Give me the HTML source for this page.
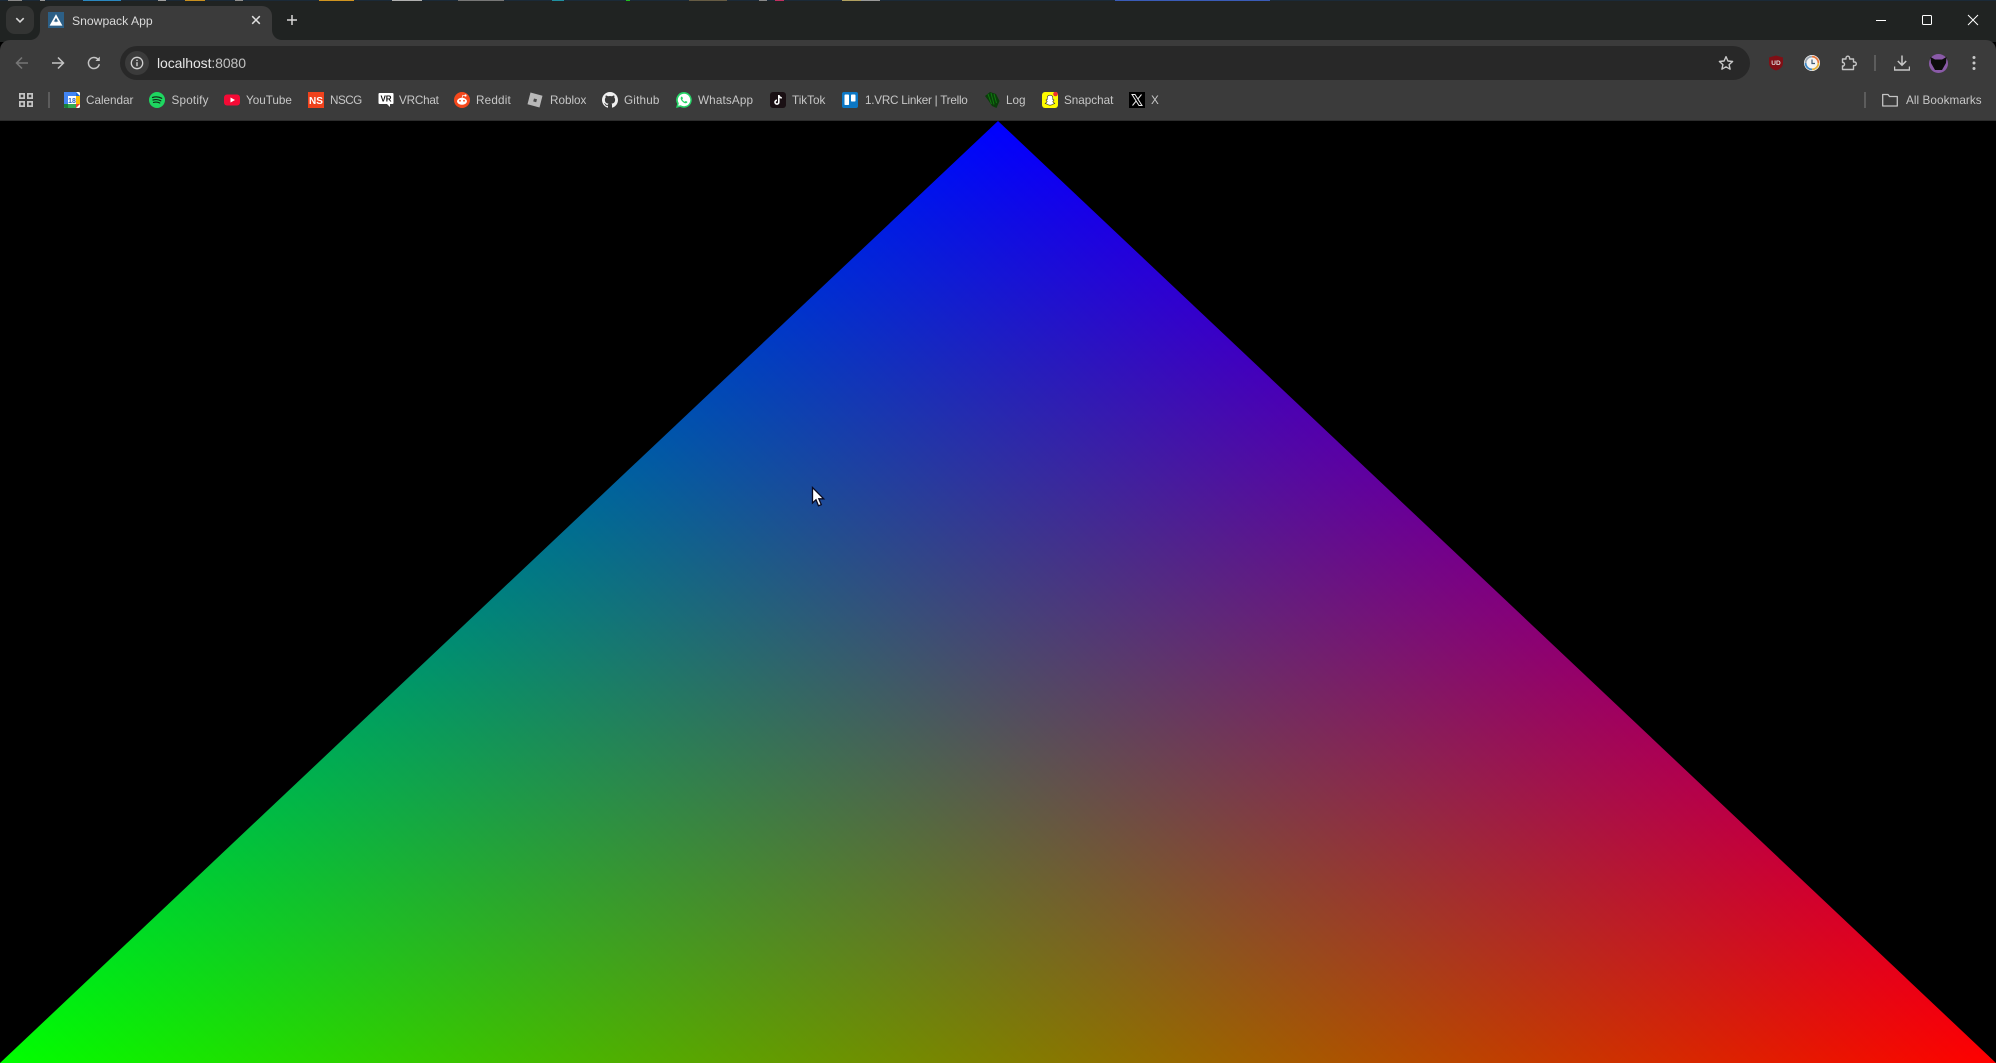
<!DOCTYPE html>
<html lang="en">
<head>
<meta charset="utf-8">
<title>Snowpack App</title>
<style>
html,body{margin:0;padding:0;background:#000;overflow:hidden}
body{width:1996px;height:1063px;position:relative;font-family:"Liberation Sans",sans-serif}
.abs,.bm,.ic{position:absolute}
.bm{top:92.5px;font-size:11.7px;line-height:15px;color:#c7c7c7;white-space:nowrap}
.ic{top:92px;width:16px;height:16px}
.p{position:absolute;top:0;height:1px}
</style>
</head>
<body>
<!-- tab strip -->
<div class="abs" style="left:0;top:0;width:1996px;height:42px;background:#202322"></div>
<!-- top strip -->
<div class="abs" style="left:0;top:0;width:1996px;height:1px;background:#1b2a38"></div>
<div class="p" style="left:8px;width:14px;background:#8a8a8a"></div>
<div class="p" style="left:40px;width:5px;background:#9a9a9a"></div>
<div class="p" style="left:83px;width:38px;background:#2a88c0"></div>
<div class="p" style="left:158px;width:8px;background:#a0a0a0"></div>
<div class="p" style="left:185px;width:20px;background:#c89020"></div>
<div class="p" style="left:235px;width:8px;background:#909090"></div>
<div class="p" style="left:319px;width:35px;background:#d09420"></div>
<div class="p" style="left:392px;width:30px;background:#b0b0b0"></div>
<div class="p" style="left:458px;width:46px;background:#777"></div>
<div class="p" style="left:552px;width:12px;background:#2090a0"></div>
<div class="p" style="left:626px;width:4px;background:#20c020"></div>
<div class="p" style="left:689px;width:38px;background:#665c44"></div>
<div class="p" style="left:759px;width:8px;background:#8a8a8a"></div>
<div class="p" style="left:775px;width:9px;background:#c03060"></div>
<div class="p" style="left:842px;width:19px;background:#b0a060"></div>
<div class="p" style="left:861px;width:19px;background:#999"></div>
<div class="p" style="left:1115px;width:155px;background:#3a5cb8"></div>

<!-- tab search -->
<div class="abs" style="left:6px;top:6px;width:28px;height:28px;border-radius:9px;background:#333433"></div>
<svg class="abs" style="left:14px;top:14px" width="12" height="12" viewBox="0 0 12 12"><path d="M2.3 4.2 6 7.9 9.7 4.2" fill="none" stroke="#d8d8d8" stroke-width="1.6"/></svg>

<!-- toolbar + bookmarks -->
<div class="abs" style="left:0;top:40px;width:1996px;height:80px;background:#3b3b3b;border-radius:10px 10px 0 0"></div>
<div class="abs" style="left:0;top:120px;width:1996px;height:1px;background:#2c2c2c"></div>

<!-- active tab -->
<div class="abs" style="left:40px;top:6px;width:232px;height:36px;background:#3b3b3b;border-radius:10px 10px 0 0"></div>
<svg class="abs" style="left:272px;top:30px" width="10" height="10" viewBox="0 0 10 10"><path d="M0 0V10H10A10 10 0 0 1 0 0Z" fill="#3b3b3b"/></svg>
<svg class="abs" style="left:30px;top:30px" width="10" height="10" viewBox="0 0 10 10"><path d="M10 0V10H0A10 10 0 0 0 10 0Z" fill="#3b3b3b"/></svg>
<svg class="abs" style="left:48px;top:12px" width="16" height="16" viewBox="0 0 16 16"><rect width="16" height="16" fill="#2c5f86"/><path d="M8 2.2 14.4 13.6H1.6Z" fill="#fff"/><path d="M8 5.8 10.4 10 9 9.2 8 10.4 7 9.2 5.6 10Z" fill="#2c5f86"/></svg>
<div class="abs" style="left:72px;top:14px;font-size:12.2px;line-height:15px;color:#d9d9d9;white-space:nowrap">Snowpack App</div>
<svg class="abs" style="left:250px;top:14px" width="12" height="12" viewBox="0 0 12 12"><path d="M2.2 2.2 9.8 9.8M9.800 2.2 2.2 9.8" stroke="#e0e0e0" stroke-width="1.5"/></svg>
<svg class="abs" style="left:286px;top:14px" width="12" height="12" viewBox="0 0 12 12"><path d="M6 1V11M1 6H11" stroke="#d8d8d8" stroke-width="1.5"/></svg>

<!-- window controls -->
<div class="abs" style="left:1876px;top:20px;width:10px;height:1px;background:#fff"></div>
<div class="abs" style="left:1922px;top:15px;width:8px;height:8px;border:1px solid #fff;border-radius:1.5px"></div>
<svg class="abs" style="left:1967px;top:14px" width="12" height="12" viewBox="0 0 12 12"><path d="M1 1 11 11M11 1 1 11" stroke="#fff" stroke-width="1"/></svg>

<!-- nav -->
<svg class="abs" style="left:14px;top:55px" width="16" height="16" viewBox="0 0 16 16"><path d="M14 8H2.5M8 2.5 2.5 8 8 13.5" fill="none" stroke="#767676" stroke-width="1.5"/></svg>
<svg class="abs" style="left:50px;top:55px" width="16" height="16" viewBox="0 0 16 16"><path d="M2 8H13.5M8 2.5 13.5 8 8 13.5" fill="none" stroke="#c4c4c4" stroke-width="1.5"/></svg>
<svg class="abs" style="left:86px;top:55px" width="16" height="16" viewBox="0 0 16 16"><path d="M13.3 9.2A5.5 5.5 0 1 1 12 4.3" fill="none" stroke="#c4c4c4" stroke-width="1.5"/><path d="M13.8 1.6V6H9.4Z" fill="#c4c4c4"/></svg>

<!-- omnibox -->
<div class="abs" style="left:120px;top:46px;width:1630px;height:34px;background:#282828;border-radius:17px"></div>
<div class="abs" style="left:125px;top:51px;width:24px;height:24px;background:#3b3b3b;border-radius:50%"></div>
<svg class="abs" style="left:130px;top:56px" width="14" height="14" viewBox="0 0 14 14"><circle cx="7" cy="7" r="5.7" fill="none" stroke="#d0d0d0" stroke-width="1.3"/><path d="M7 6.2V10.2" stroke="#d0d0d0" stroke-width="1.4"/><circle cx="7" cy="4.3" r=".85" fill="#d0d0d0"/></svg>
<div class="abs" style="left:157px;top:55px;font-size:14px;letter-spacing:-.1px;line-height:16px;color:#e6e6e6;white-space:nowrap">localhost<span style="color:#c0c0c0">:8080</span></div>
<svg class="abs" style="left:1718px;top:55px" width="16" height="16" viewBox="0 0 16 16"><path d="M8 1.7 9.9 6 14.6 6.5 11.1 9.6 12.1 14.2 8 11.8 3.9 14.2 4.9 9.6 1.4 6.5 6.1 6Z" fill="none" stroke="#c8c8c8" stroke-width="1.4" stroke-linejoin="round"/></svg>

<!-- extensions -->
<svg class="abs" style="left:1769px;top:55px" width="14" height="16" viewBox="0 0 14 16"><path d="M7 .5 14 2.5V8C14 12 10.500 14.500 7 15.500 3.500 14.500 0 12 0 8V2.500Z" fill="#800f15"/><text x="7" y="9.800" font-family="Liberation Sans, sans-serif" font-size="6.500" font-weight="700" fill="#ddd" text-anchor="middle">UD</text></svg>
<svg class="abs" style="left:1804px;top:55px" width="16" height="16" viewBox="0 0 16 16"><circle cx="8" cy="8" r="8" fill="#f4f4f4"/><path d="M8 1.600A6.400 6.400 0 0 1 14.400 8" fill="none" stroke="#e8763a" stroke-width="1.800"/><path d="M14.400 8A6.400 6.400 0 0 1 8 14.400" fill="none" stroke="#e8b43a" stroke-width="1.800"/><path d="M8 14.400A6.400 6.400 0 0 1 1.600 8" fill="none" stroke="#3f88c5" stroke-width="1.800"/><path d="M1.600 8A6.400 6.400 0 0 1 8 1.600" fill="none" stroke="#9aa5b1" stroke-width="1.800"/><path d="M8 4.500V8.500H11" fill="none" stroke="#3d5a73" stroke-width="1.200"/></svg>
<svg class="abs" style="left:1841px;top:55px" width="16" height="16" viewBox="0 0 16 16"><path d="M1.500 4H5V3A1.800 1.800 0 0 1 8.600 3V4H12.500V7H13.500A1.800 1.800 0 0 1 13.500 10.600H12.500V14.500H1.500V11H2.500A2 2 0 0 0 2.500 7.500H1.500Z" fill="none" stroke="#c4c4c4" stroke-width="1.400" stroke-linejoin="round"/></svg>
<div class="abs" style="left:1874px;top:55px;width:2px;height:16px;background:#5c5c5c"></div>
<svg class="abs" style="left:1894px;top:55px" width="16" height="16" viewBox="0 0 16 16"><path d="M8 .5V10M3.800 6 8 10.200 12.200 6M.5 11.500V15H15.500V11.500" fill="none" stroke="#c8c8c8" stroke-width="1.500"/></svg>
<svg class="abs" style="left:1929px;top:54px" width="19" height="19" viewBox="0 0 19 19"><circle cx="9.500" cy="9.500" r="9.500" fill="#8a5aa8"/><path d="M1.500 3 6 5.500H13L17.500 3 17 9 13 16H6L2 9Z" fill="#0c0c0c"/></svg>
<svg class="abs" style="left:1966px;top:55px" width="16" height="16" viewBox="0 0 16 16"><circle cx="8" cy="2.500" r="1.500" fill="#c8c8c8"/><circle cx="8" cy="8" r="1.500" fill="#c8c8c8"/><circle cx="8" cy="13.500" r="1.500" fill="#c8c8c8"/></svg>

<!-- bookmarks bar -->
<svg class="abs" style="left:19px;top:93px" width="14" height="14" viewBox="0 0 14 14"><g fill="none" stroke="#c4c4c4" stroke-width="1.700"><rect x=".85" y=".85" width="4.300" height="4.300"/><rect x="8.850" y=".85" width="4.300" height="4.300"/><rect x=".85" y="8.850" width="4.300" height="4.300"/><rect x="8.850" y="8.850" width="4.300" height="4.300"/></g></svg>
<div class="abs" style="left:48px;top:92px;width:2px;height:16px;background:#5c5c5c"></div>

<svg class="ic" style="left:64px" viewBox="0 0 16 16"><rect width="16" height="16" rx="1.500" fill="#fff"/><path d="M0 0H12V4H4V12H0Z" fill="#4285f4"/><path d="M12 0 16 4H12Z" fill="#1a67d2"/><path d="M12 4H16V12H12Z" fill="#fbbc04"/><path d="M4 12H12V16H4Z" fill="#34a853"/><path d="M0 12H4V16H1.500A1.500 1.500 0 0 1 0 14.500Z" fill="#188038"/><path d="M12 12H16L12 16Z" fill="#ea4335"/><text x="8" y="11" font-family="Liberation Sans, sans-serif" font-size="7" font-weight="700" fill="#2a63c8" text-anchor="middle">18</text></svg>
<div class="bm" style="left:86px">Calendar</div>

<svg class="ic" style="left:149px" viewBox="0 0 16 16"><circle cx="8" cy="8" r="8" fill="#1ed760"/><path d="M3.500 5.500C6.500 4.600 10 4.800 12.700 6.300M4 8C6.500 7.300 9.500 7.500 11.800 8.800M4.500 10.400C6.500 9.900 9 10 10.800 11" fill="none" stroke="#102c18" stroke-width="1.200" stroke-linecap="round"/></svg>
<div class="bm" style="left:171.500px;letter-spacing:.2px">Spotify</div>

<svg class="ic" style="left:224px" viewBox="0 0 16 16"><rect y="2.500" width="16" height="11" rx="3" fill="#f50a35"/><path d="M6.500 5.500 11 8 6.500 10.500Z" fill="#fff"/></svg>
<div class="bm" style="left:246px">YouTube</div>

<svg class="ic" style="left:308px" viewBox="0 0 16 16"><rect width="16" height="16" fill="#f0421c"/><text x="8" y="12" font-family="Liberation Sans, sans-serif" font-size="10" font-weight="700" fill="#fff" text-anchor="middle">NS</text></svg>
<div class="bm" style="left:330px;letter-spacing:-.5px">NSCG</div>

<svg class="ic" style="left:378px" viewBox="0 0 16 16"><path d="M1.500 1H14.500A1 1 0 0 1 15.500 2V11A1 1 0 0 1 14.500 12H12V15L9 12H1.500A1 1 0 0 1 .5 11V2A1 1 0 0 1 1.500 1Z" fill="#fff"/><text x="8" y="9.500" font-family="Liberation Sans, sans-serif" font-size="8" font-weight="700" fill="#111" text-anchor="middle">VR</text></svg>
<div class="bm" style="left:399px;letter-spacing:-.2px">VRChat</div>

<svg class="ic" style="left:454px" viewBox="0 0 16 16"><circle cx="8" cy="8" r="8" fill="#f5481c"/><ellipse cx="8" cy="9.300" rx="5" ry="3.500" fill="#fff"/><circle cx="6" cy="8.800" r=".9" fill="#f5481c"/><circle cx="10" cy="8.800" r=".9" fill="#f5481c"/><circle cx="11.500" cy="3.500" r="1.100" fill="#fff"/><path d="M8 6 8.800 3.300 11 3.700" fill="none" stroke="#fff" stroke-width=".7"/></svg>
<div class="bm" style="left:476px;letter-spacing:.2px">Reddit</div>

<svg class="ic" style="left:527px" viewBox="0 0 16 16"><path d="M3.500 .5 15.500 3.800 12.500 15.500 .5 12.200Z" fill="#b8b8b8"/><path d="M7 6.500 10 7.300 9.200 10.200 6.200 9.400Z" fill="#4a4a4a"/></svg>
<div class="bm" style="left:550px">Roblox</div>

<svg class="ic" style="left:602px" viewBox="0 0 16 16"><path d="M8 0C3.600 0 0 3.600 0 8C0 11.500 2.300 14.500 5.500 15.600C5.900 15.700 6 15.400 6 15.200V13.800C3.800 14.300 3.300 12.900 3.300 12.900C2.900 12 2.400 11.700 2.400 11.700C1.700 11.200 2.500 11.200 2.500 11.200C3.300 11.300 3.700 12 3.700 12C4.400 13.300 5.600 12.900 6 12.700C6.100 12.200 6.300 11.800 6.500 11.600C4.700 11.400 2.900 10.700 2.900 7.700C2.900 6.800 3.200 6.100 3.700 5.600C3.600 5.400 3.300 4.600 3.800 3.500C3.800 3.500 4.500 3.300 6 4.300C6.600 4.100 7.300 4 8 4C8.700 4 9.400 4.100 10 4.300C11.500 3.300 12.200 3.500 12.200 3.500C12.700 4.600 12.400 5.400 12.300 5.600C12.800 6.100 13.100 6.800 13.100 7.700C13.100 10.700 11.300 11.400 9.500 11.600C9.800 11.900 10 12.300 10 13V15.200C10 15.400 10.100 15.700 10.500 15.600C13.700 14.500 16 11.500 16 8C16 3.600 12.400 0 8 0Z" fill="#f0f0f0"/></svg>
<div class="bm" style="left:624px;letter-spacing:.2px">Github</div>

<svg class="ic" style="left:676px" viewBox="0 0 16 16"><path d="M8 0A7.900 7.900 0 0 0 1.200 11.900L0 16 4.200 14.900A7.900 7.900 0 1 0 8 0Z" fill="#25d366"/><path d="M8 1.800A6.200 6.200 0 0 0 2.800 11.300L2.200 13.800 4.700 13.200A6.200 6.200 0 1 0 8 1.800Z" fill="#fff"/><path d="M5.700 4.500C5.200 4.700 4.600 5.400 4.700 6.500C4.900 8.500 7.300 11 9.500 11.300C10.600 11.400 11.300 10.600 11.400 10C11.400 9.700 10 9 9.700 9C9.400 9 9.100 9.800 8.800 9.800C8.100 9.700 6.500 8.200 6.300 7.400C6.300 7.100 6.900 6.800 6.900 6.400C6.900 6.100 6.300 4.500 5.700 4.500Z" fill="#25d366"/></svg>
<div class="bm" style="left:698px;letter-spacing:.15px">WhatsApp</div>

<svg class="ic" style="left:770px" viewBox="0 0 16 16"><rect width="16" height="16" rx="3" fill="#1a1014"/><path d="M8.800 3V10.200A1.900 1.900 0 1 1 7 8.300M8.800 3.200C9.200 4.800 10.200 5.700 11.800 6" fill="none" stroke="#fff" stroke-width="1.600"/></svg>
<div class="bm" style="left:792px">TikTok</div>

<svg class="ic" style="left:842px" viewBox="0 0 16 16"><rect width="16" height="16" rx="2" fill="#0c77c4"/><rect x="2.500" y="2.500" width="4.500" height="10.500" rx=".8" fill="#fff"/><rect x="9" y="2.500" width="4.500" height="7" rx=".8" fill="#fff"/></svg>
<div class="bm" style="left:865px;letter-spacing:-.24px">1.VRC Linker | Trello</div>

<svg class="ic" style="left:984px" viewBox="0 0 16 16"><path d="M1 4 6 0 12 2 15.500 9 12.500 16 8 14 4 8Z" fill="#0a3d0a"/><path d="M4 2 7.500 12M7 1 10 12.500M10 2 12.500 11" stroke="#0f7a0f" stroke-width="1"/></svg>
<div class="bm" style="left:1006px">Log</div>

<svg class="ic" style="left:1042px" viewBox="0 0 16 16"><rect width="16" height="16" rx="3" fill="#fffc00"/><path d="M8 3.200C9.800 3.200 10.800 4.500 10.800 6.200V7.500L12 8C11.800 8.800 11 9 10.800 9.500 11 10.500 12.300 11 12.800 11.300 12.300 12 11 11.800 10.500 12.300 9.800 12.900 9 13.200 8 13.200 7 13.200 6.200 12.900 5.500 12.300 5 11.800 3.700 12 3.200 11.300 3.700 11 5 10.500 5.200 9.500 5 9 4.200 8.800 4 8L5.200 7.500V6.200C5.200 4.500 6.200 3.200 8 3.200Z" fill="#fff" stroke="#222" stroke-width=".6"/><circle cx="13.500" cy="2" r="2.300" fill="#f03030"/></svg>
<div class="bm" style="left:1064px">Snapchat</div>

<svg class="ic" style="left:1129px" viewBox="0 0 16 16"><rect width="16" height="16" fill="#000"/><path d="M3 2.500H6L13 13.500H10Z" fill="none" stroke="#eee" stroke-width="1"/><path d="M12.500 2.500 9 6.800M7 9.200 3.500 13.500" stroke="#eee" stroke-width="1"/></svg>
<div class="bm" style="left:1151px">X</div>

<div class="abs" style="left:1864px;top:92px;width:2px;height:16px;background:#5c5c5c"></div>
<svg class="abs" style="left:1882px;top:92px" width="16" height="16" viewBox="0 0 16 16"><path d="M.7 2.500H6L7.500 4.500H15.300V14H.7Z" fill="none" stroke="#c4c4c4" stroke-width="1.300" stroke-linejoin="round"/></svg>
<div class="bm" style="left:1906px;letter-spacing:.08px">All Bookmarks</div>

<!-- triangle -->
<svg class="abs" style="left:0;top:0;isolation:isolate" width="1996" height="1063" viewBox="0 0 1996 1063">
<defs>
<linearGradient id="r" gradientUnits="userSpaceOnUse" x1="1996" y1="1063" x2="1055.570" y2="66.660"><stop offset="0" stop-color="#f00"/><stop offset="1" stop-color="#000"/></linearGradient>
<linearGradient id="g" gradientUnits="userSpaceOnUse" x1="0" y1="1063" x2="940.430" y2="66.660"><stop offset="0" stop-color="#0f0"/><stop offset="1" stop-color="#000"/></linearGradient>
<linearGradient id="b" gradientUnits="userSpaceOnUse" x1="998" y1="121" x2="998" y2="1063"><stop offset="0" stop-color="#00f"/><stop offset="1" stop-color="#000"/></linearGradient>
</defs>
<polygon points="998,121 0,1063 1996,1063" fill="#000"/>
<polygon points="998,121 0,1063 1996,1063" fill="url(#r)" style="mix-blend-mode:plus-lighter"/>
<polygon points="998,121 0,1063 1996,1063" fill="url(#g)" style="mix-blend-mode:plus-lighter"/>
<polygon points="998,121 0,1063 1996,1063" fill="url(#b)" style="mix-blend-mode:plus-lighter"/>
</svg>

<!-- cursor -->
<svg class="abs" style="left:811px;top:486px" width="16" height="22" viewBox="0 0 16 22"><path d="M1.500 1.500V17L5 13.700 7.500 19.800 10.300 18.600 7.800 12.800H12.700Z" fill="#fff" stroke="#0a0a20" stroke-width="1.300"/></svg>
</body>
</html>
